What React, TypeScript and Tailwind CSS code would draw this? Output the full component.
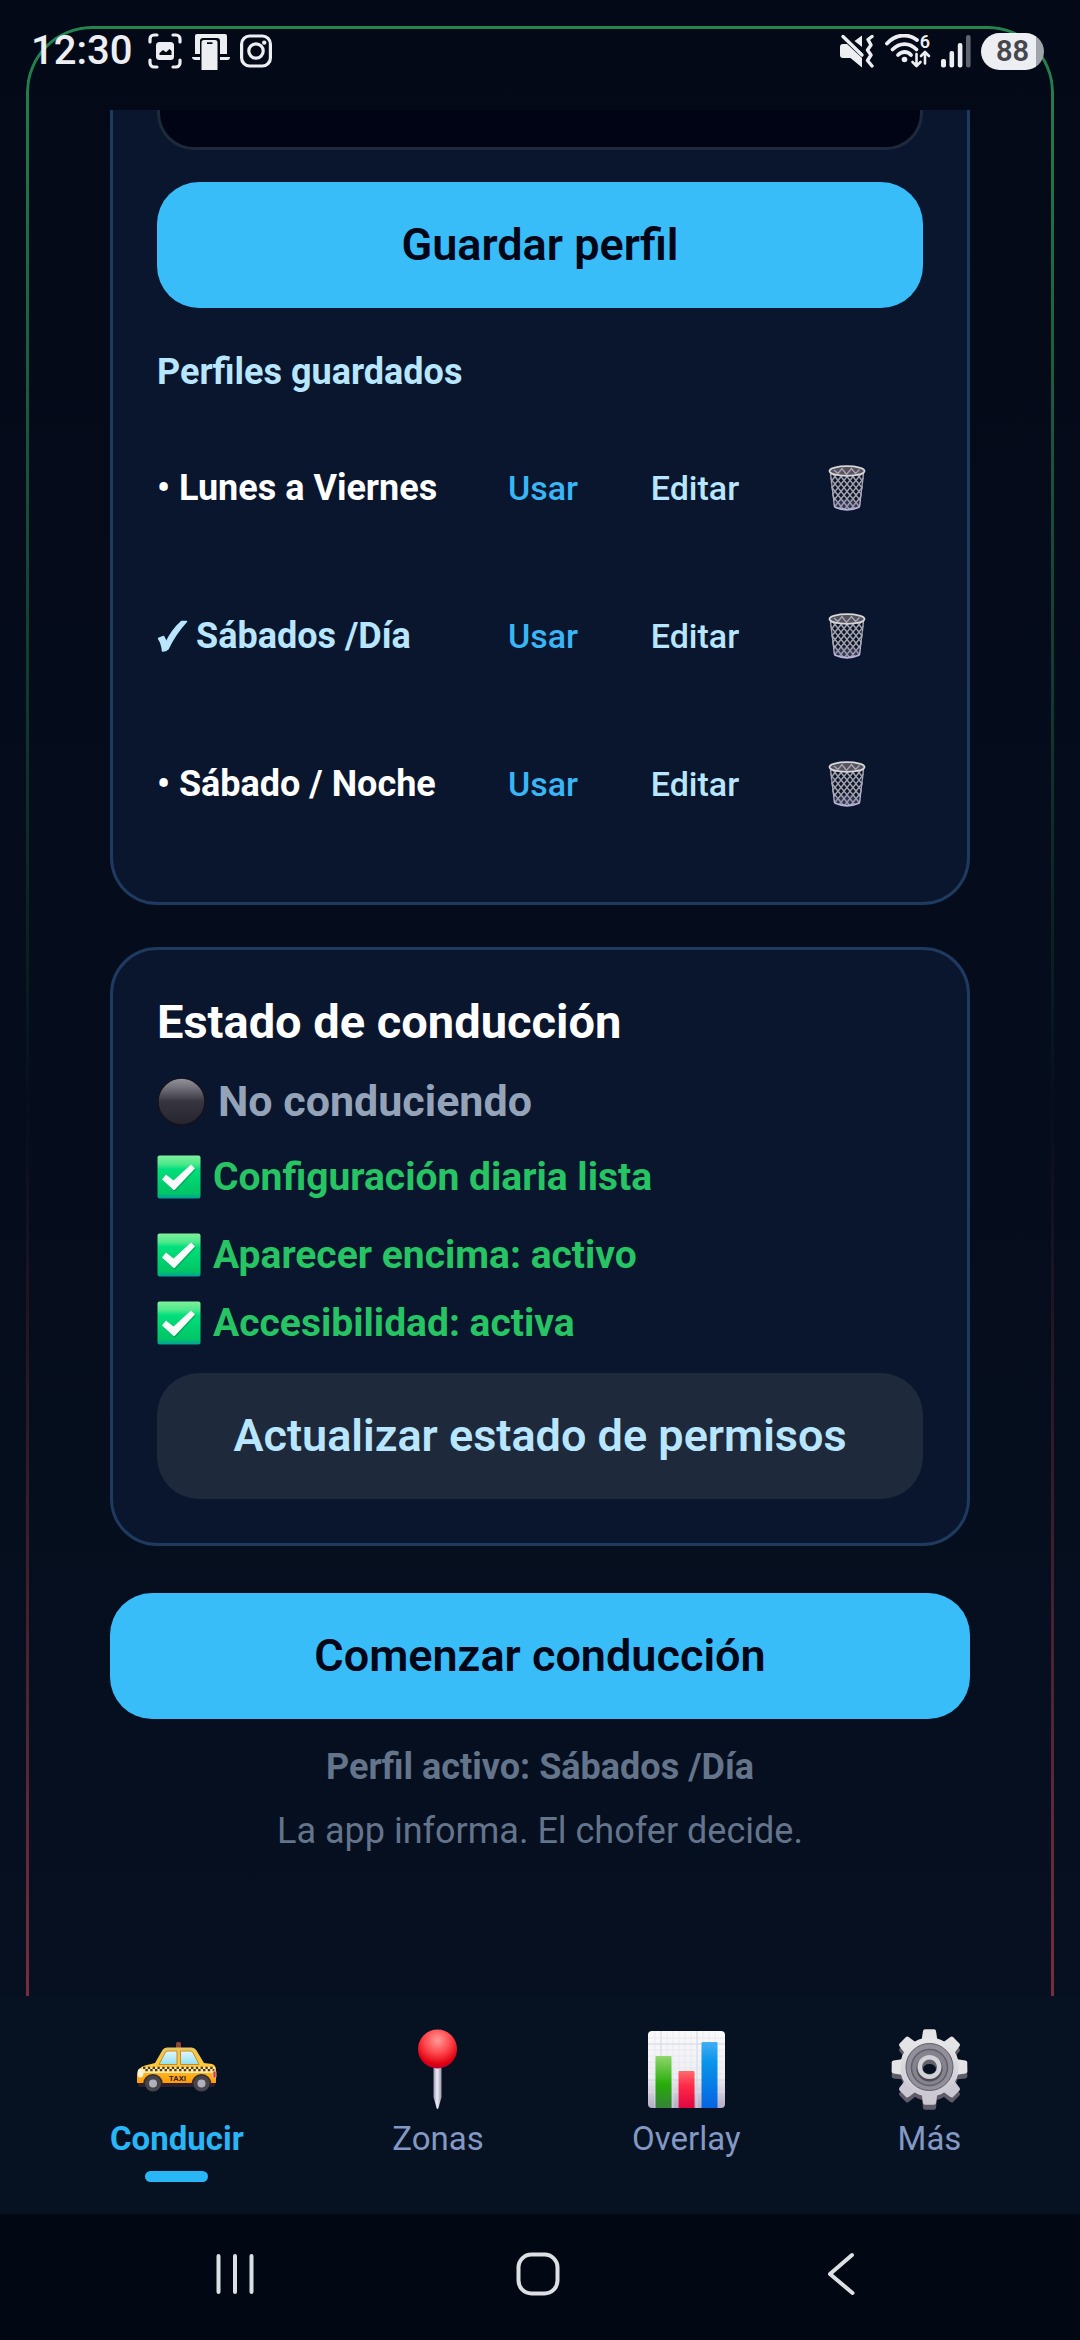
import { useId, useState } from 'react';

interface Profile {
  id: string;
  name: string;
}

interface Tab {
  id: string;
  label: string;
  icon: React.ReactNode;
}

const profiles: Profile[] = [
  { id: 'weekdays', name: 'Lunes a Viernes' },
  { id: 'saturday-day', name: 'Sábados /Día' },
  { id: 'saturday-night', name: 'Sábado / Noche' },
];

/* ---------- status bar icons ---------- */

const ScreenshotIcon = () => (
  <svg width="34" height="36" viewBox="0 0 34 36" fill="none" stroke="#eceef2" strokeWidth="3.2" strokeLinecap="round">
    <path d="M2 9V6a4 4 0 0 1 4-4h3M25 2h3a4 4 0 0 1 4 4v3M32 27v3a4 4 0 0 1-4 4h-3M9 34H6a4 4 0 0 1-4-4v-3" />
    <rect x="8" y="9" width="18" height="18" rx="3.5" fill="#eceef2" stroke="none" />
    <path d="M11.500 22v-2l3.500-3 3 2.200 3.500-3.200 2 2v4z" fill="#040915" stroke="none" />
  </svg>
);

const LinkedPhoneIcon = () => (
  <svg width="38" height="37" viewBox="0 0 38 37" fill="#eceef2">
    <path d="M3 3a2 2 0 0 1 2-2h28a2 2 0 0 1 2 2v18h-7V8a3 3 0 0 0-3-3H11a3 3 0 0 0-3 3v13H3z" />
    <path d="M0 24h8v3H3.500C1.500 27 0 25.800 0 24zM28 24h10c0 1.800-1 3-2.500 3H28z" />
    <path fillRule="evenodd" d="M12 7h11a2.500 2.500 0 0 1 2.500 2.500V37h-16V9.500A2.500 2.500 0 0 1 12 7zm3 2.300v1.700h5.500V9.300z" />
  </svg>
);

const InstagramIcon = () => (
  <svg width="32" height="34" viewBox="0 0 32 34" fill="none" stroke="#eceef2" strokeWidth="3.200">
    <rect x="1.600" y="2" width="28.800" height="30" rx="8" />
    <circle cx="16" cy="17" r="7.200" />
    <circle cx="24.200" cy="8.600" r="2.200" fill="#eceef2" stroke="none" />
  </svg>
);

const MutedIcon = () => (
  <svg width="36" height="34" viewBox="0 0 36 34">
    <path d="M1 13q0-3 3-3h4l15 14v9.500L11.500 24H4q-3 0-3-3z" fill="#eceef2" />
    <path d="M15.500 7 23 1.500V13z" fill="#eceef2" />
    <path d="M4 2.500 23 21" stroke="#eceef2" strokeWidth="3.400" strokeLinecap="round" />
    <path d="M33 2.500 29 5.500 32 11 28.500 16 32 21 28.500 26.500 33 32" fill="none" stroke="#eceef2" strokeWidth="3.400" strokeLinecap="round" strokeLinejoin="round" />
  </svg>
);

const WifiIcon = () => (
  <svg width="46" height="34" viewBox="0 0 46 34" fill="none" stroke="#eceef2" strokeLinecap="round">
    <path d="M2 9.500C11-.5 24-.5 32 6" strokeWidth="3.800" />
    <path d="M7.500 15.500c7-7.300 17-7.300 24 0" strokeWidth="3.800" />
    <path d="M13 21c4-4 9.500-4 13 0" strokeWidth="3.800" />
    <circle cx="19.500" cy="25.500" r="2.800" fill="#eceef2" stroke="none" />
    <path d="M31.500 20v11.500M27.500 28l4 4 4-4M40 29.500V18.500M36 22l4-4 4 4" strokeWidth="2.600" strokeLinejoin="round" />
    <text x="40" y="14" textAnchor="middle" fontFamily="Roboto, sans-serif" fontSize="18" fontWeight="600" fill="#eceef2" stroke="none">6</text>
  </svg>
);

const SignalIcon = () => (
  <svg width="30" height="34" viewBox="0 0 30 34" fill="#eceef2">
    <rect x="0" y="25" width="5" height="8.500" rx="2" />
    <rect x="8.500" y="17" width="4.600" height="16.500" rx="2" />
    <rect x="16.800" y="9" width="4.600" height="24.500" rx="2" />
    <rect x="25" y="1" width="4.600" height="32.500" rx="2" opacity=".4" />
  </svg>
);

/* ---------- emoji style drawings ---------- */

const TrashIcon = () => {
  const id = useId();
  return (
    <svg width="38" height="48" viewBox="0 0 38 48" fill="none">
      <clipPath id={`${id}b`}>
        <path d="M1.500 8Q19 15 36.500 8L32 43q-13 5-26 0z" />
      </clipPath>
      <linearGradient id={`${id}g`} x1="0" y1="0" x2="0" y2="1">
        <stop offset="0" stopColor="#a5a3ab" />
        <stop offset="1" stopColor="#b5b0cc" />
      </linearGradient>
      <g clipPath={`url(#${id}b)`} stroke="#a3a2a8" strokeWidth="1.500">
        {[-36, -30, -24, -18, -12, -6, 0, 6, 12, 18, 24, 30, 36].map((x) => (
          <path key={x} d={`M${x} 4l34 42M${38 - x} 4l-34 42`} />
        ))}
      </g>
      <path d="M6.500 38q12.500-6 25 0v5q-12.500 6-25 0z" fill="#8a83b0" opacity=".3" />
      <path d="M6.500 43q12.500 5.500 25 0" stroke="#b9b4d9" strokeWidth="1.800" />
      <path d="M2.500 9l4 34M35.500 9l-4 34" stroke={`url(#${id}g)`} strokeWidth="1.300" />
      <ellipse cx="19" cy="7" rx="17.500" ry="4.800" fill="#55535f" stroke="#d9d6d9" strokeWidth="1.800" />
      <path d="M6 6l4 3.500 4-5 4.500 6 5-6 4 5 4-4" stroke="#a9a7b2" strokeWidth="1.300" />
    </svg>
  );
};

const CheckBadge = () => {
  const id = useId();
  return (
    <svg className="shrink-0" width="44" height="44" viewBox="0 0 44 44">
      <linearGradient id={id} x1="0" y1="0" x2="0" y2="1">
        <stop offset="0" stopColor="#7ff09a" />
        <stop offset=".2" stopColor="#4de88c" />
        <stop offset=".32" stopColor="#00df7c" />
        <stop offset=".88" stopColor="#00c565" />
        <stop offset="1" stopColor="#009f9c" />
      </linearGradient>
      <rect x=".5" y=".5" width="43" height="43" rx="2" fill={`url(#${id})`} />
      <path d="M5 24.500 9 19.500l7.500 6L34 9.500l4 4L18 34.500q-1 1-2 0z" fill="#00934f" transform="translate(.8 1.200)" opacity=".6" />
      <path d="M5 24.500 9 19.500l7.500 6L34 9.500l4 4L18 34.500q-1 1-2 0z" fill="#f8fbf9" />
    </svg>
  );
};

const BlackCircle = () => (
  <svg className="shrink-0" width="49" height="49" viewBox="0 0 49 49">
    <linearGradient id="ball" x1="0" y1="0" x2="0" y2="1">
      <stop offset="0" stopColor="#96949c" />
      <stop offset=".25" stopColor="#6a6872" />
      <stop offset=".5" stopColor="#35343f" />
      <stop offset="1" stopColor="#26252f" />
    </linearGradient>
    <circle cx="24.500" cy="24.500" r="23.500" fill="url(#ball)" stroke="#14131d" strokeWidth="1.500" />
  </svg>
);

const TaxiIcon = () => (
  <svg width="81" height="81" viewBox="0 0 81 81">
    <linearGradient id="taxi" x1="0" y1="0" x2="0" y2="1">
      <stop offset="0" stopColor="#e8c55c" />
      <stop offset=".5" stopColor="#ffc837" />
      <stop offset="1" stopColor="#ff9a06" />
    </linearGradient>
    <linearGradient id="glass" x1="0" y1="0" x2="0" y2="1">
      <stop offset="0" stopColor="#e4f6fa" />
      <stop offset="1" stopColor="#8fe0f4" />
    </linearGradient>
    <rect x="40" y="13" width="5" height="7" rx="1.500" fill="#8a4438" />
    <path d="M2 52h77v4q0 2-3 2H5q-3 0-3-2z" fill="#2c1f2b" />
    <path d="M1 54V46q1-8 8-9.500l10-2.500L26.500 21q1.300-2.500 4.500-2.500h24q3.500 0 5.500 3L68 34l8 1q3.500 1 4 5v14z" fill="url(#taxi)" />
    <path d="M23 35.500 29 24q1-2 3-2h9v13.500zM44.500 22H54q2 0 3.200 2l6 11.500H44.500z" fill="url(#glass)" stroke="#c98a22" strokeWidth="1" />
    <path d="M6 39.500h73M7 42.500h72" stroke="#ffe9a0" strokeWidth="3" />
    <path d="M7 38.800h72" stroke="#4b3a26" strokeWidth="2.200" strokeDasharray="2.400 2.400" />
    <path d="M9.400 41.200h69" stroke="#4b3a26" strokeWidth="2.200" strokeDasharray="2.400 2.400" />
    <ellipse cx="4.500" cy="44" rx="3" ry="4.500" fill="#fff5d6" />
    <rect x="77" y="42" width="3" height="7" rx="1" fill="#d8322c" stroke="#f5d0c0" strokeWidth=".8" />
    <text x="41.500" y="51.500" textAnchor="middle" fontFamily="Roboto, sans-serif" fontSize="8" fontWeight="700" fill="#3a2412">TAXI</text>
    <path d="M7 55a10 10 0 0 1 20 0zM55.500 55a10 10 0 0 1 20 0z" fill="#3a2b28" />
    <circle cx="17" cy="54.500" r="8" fill="#46454b" />
    <circle cx="65.500" cy="54.500" r="8" fill="#46454b" />
    <circle cx="17" cy="54.500" r="4" fill="#b3b0bd" />
    <circle cx="65.500" cy="54.500" r="4" fill="#b3b0bd" />
  </svg>
);

const PinIcon = () => (
  <svg width="81" height="81" viewBox="0 0 81 81">
    <radialGradient id="pinHead" cx=".5" cy=".28" r=".72">
      <stop offset="0" stopColor="#ff9a98" />
      <stop offset=".45" stopColor="#ff4a50" />
      <stop offset=".85" stopColor="#e0000f" />
      <stop offset="1" stopColor="#b8003c" />
    </radialGradient>
    <linearGradient id="needle">
      <stop offset="0" stopColor="#9a97ab" />
      <stop offset=".45" stopColor="#f0eef8" />
      <stop offset="1" stopColor="#9a97ab" />
    </linearGradient>
    <path d="M36.500 36h8v32l-3 11q-1 2-2 0l-3-11z" fill="url(#needle)" />
    <circle cx="40.500" cy="20" r="19.500" fill="url(#pinHead)" />
  </svg>
);

const ChartIcon = () => (
  <svg width="81" height="81" viewBox="0 0 81 81">
    <linearGradient id="paper" x1="0" y1="0" x2="0" y2="1">
      <stop offset="0" stopColor="#fafafa" />
      <stop offset=".6" stopColor="#eeeef3" />
      <stop offset="1" stopColor="#b4acc4" />
    </linearGradient>
    <linearGradient id="barGreen" x1="0" y1="0" x2="0" y2="1">
      <stop offset="0" stopColor="#8ed66a" />
      <stop offset=".55" stopColor="#27ac09" />
      <stop offset="1" stopColor="#35813a" />
    </linearGradient>
    <linearGradient id="barRed" x1="0" y1="0" x2="0" y2="1">
      <stop offset="0" stopColor="#ff6a6c" />
      <stop offset=".4" stopColor="#ff2a48" />
      <stop offset="1" stopColor="#e0063f" />
    </linearGradient>
    <linearGradient id="barBlue" x1="0" y1="0" x2="0" y2="1">
      <stop offset="0" stopColor="#44adf5" />
      <stop offset=".3" stopColor="#0a95ea" />
      <stop offset="1" stopColor="#0563e2" />
    </linearGradient>
    <rect x="2" y="2" width="77" height="77" rx="4" fill="url(#paper)" />
    <path d="M2 15h77M2 51h77M15 2v77M51 2v77" stroke="#cfd4e4" strokeWidth="1" />
    <path d="M2 9h77M2 21h77M2 27h77M2 33h77M2 39h77M2 45h77M2 63h77M9 2v77M21 2v77M27 2v77M33 2v77M39 2v77M45 2v77M57 2v77M63 2v77M69 2v77" stroke="#e2e5ee" strokeWidth="1" opacity=".7" />
    <path d="M9.500 79V28q0-1 1-1h14q1 0 1 1v51z" fill="url(#barGreen)" />
    <path d="M32.500 79V43q0-1 1-1h14q1 0 1 1v36z" fill="url(#barRed)" />
    <path d="M55.500 79V14q0-1 1-1h14q1 0 1 1v65z" fill="url(#barBlue)" />
  </svg>
);

const gearAngles = [0, 45, 90, 135, 180, 225, 270, 315];

const GearIcon = () => (
  <svg width="81" height="81" viewBox="0 0 81 81">
    <linearGradient id="gear" gradientUnits="userSpaceOnUse" x1="0" y1="0" x2="0" y2="76">
      <stop offset="0" stopColor="#ececec" />
      <stop offset="1" stopColor="#c5c2cf" />
    </linearGradient>
    {/* thickness below the face */}
    <g fill="#5f5b68" transform="translate(0 5)">
      <circle cx="40.500" cy="38" r="29" />
      {gearAngles.map((a) => (
        <path key={a} d="M33 12l1-10q.3-1.800 2-1.800h9q1.700 0 2 1.800l1 10z" transform={`rotate(${a} 40.500 38)`} />
      ))}
    </g>
    <circle cx="40.500" cy="38" r="29.500" fill="#e0dfe3" />
    {gearAngles.map((a) => (
      <path key={a} d="M32.500 12l1.500-10q.3-1.800 2-1.800h9q1.700 0 2 1.800l1.500 10z" fill={a > 90 && a < 270 ? '#cbc8d3' : '#e4e3e6'} transform={`rotate(${a} 40.500 38)`} />
    ))}
    <circle cx="40.500" cy="38" r="29" fill="url(#gear)" />
    <circle cx="40.500" cy="38" r="23.500" fill="#918f9a" stroke="#5c5a64" strokeWidth="1" />
    <circle cx="40.500" cy="38.500" r="18" fill="#85838e" stroke="#62606b" strokeWidth="1.500" />
    <circle cx="40.500" cy="39.500" r="13" fill="#4e4c57" />
    <circle cx="40.500" cy="38" r="12" fill="#d3d2d7" />
    <circle cx="40.500" cy="38" r="7.500" fill="#64626d" />
    <ellipse cx="40.500" cy="40" rx="6.500" ry="5" fill="#061122" />
  </svg>
);

const tabs: Tab[] = [
  { id: 'drive', label: 'Conducir', icon: <TaxiIcon /> },
  { id: 'zones', label: 'Zonas', icon: <PinIcon /> },
  { id: 'overlay', label: 'Overlay', icon: <ChartIcon /> },
  { id: 'more', label: 'Más', icon: <GearIcon /> },
];

/* ---------- layout pieces ---------- */

const StatusBar = () => (
  <header className="relative flex h-[110px] items-center justify-between pr-[36px] pb-2 pl-[31px]">
    <div className="flex items-center gap-[10px]">
      <span className="mr-[6px] text-[40px] leading-[44px] font-medium text-[#eceef2]">12:30</span>
      <ScreenshotIcon />
      <LinkedPhoneIcon />
      <InstagramIcon />
    </div>
    <div className="flex items-center gap-[10px]">
      <MutedIcon />
      <WifiIcon />
      <SignalIcon />
      <span className="flex h-[37px] w-[63px] items-center justify-center rounded-full bg-linear-to-r from-[#eceef2] from-87% to-[#9fa3aa] to-87% text-[29px] leading-none font-semibold text-[#45474d]">
        88
      </span>
    </div>
  </header>
);

interface ProfileRowProps {
  profile: Profile;
  active: boolean;
  onUse: () => void;
}

const ProfileRow = ({ profile, active, onUse }: ProfileRowProps) => (
  <li className="flex h-[148px] items-center">
    <span className={`flex-1 text-[36px] leading-[42px] font-bold whitespace-nowrap ${active ? 'text-sky-200' : 'text-white'}`}>
      {active ? (
        <span className="flex items-center gap-2">
          <svg width="31" height="32" viewBox="0 0 31 32" fill="#bae6fd" stroke="#bae6fd" strokeWidth="1.500" strokeLinejoin="round" aria-label="Activo">
            <path d="M1.500 18.500 6.500 16.500q1.800 2.500 2.500 6Q15 10 24.500 1.500h5Q18 14 11 29q-2 2-5.500 2Q5 23.500 1.500 18.500z" />
          </svg>
          {profile.name}
        </span>
      ) : (
        `• ${profile.name}`
      )}
    </span>
    <button onClick={onUse} className="h-[126px] w-[152px] text-[34px] font-medium text-[#38b6f5]">
      Usar
    </button>
    <button className="h-[126px] w-[152px] text-[34px] font-medium text-sky-200">Editar</button>
    <button aria-label="Eliminar" className="flex h-[126px] w-[152px] items-center justify-center">
      <TrashIcon />
    </button>
  </li>
);

const CheckLine = ({ children }: { children: React.ReactNode }) => (
  <p className="flex items-center gap-3 text-[39px] leading-[46px] font-bold text-[#26c463]">
    <CheckBadge />
    {children}
  </p>
);

const SystemNav = () => (
  <div className="grid h-[126px] grid-cols-3 items-center justify-items-center bg-[#020813] pr-[88px] pb-[6px] pl-[84px]">
    <button aria-label="Recientes">
      <svg width="38" height="44" viewBox="0 0 38 44" stroke="#dcdfe3" strokeWidth="4" strokeLinecap="round">
        <path d="M2.500 4v36M19 4v36M35.500 4v36" />
      </svg>
    </button>
    <button aria-label="Inicio">
      <svg width="46" height="46" viewBox="0 0 46 46" fill="none" stroke="#dcdfe3" strokeWidth="4">
        <rect x="3.500" y="3.500" width="39" height="39" rx="13" />
      </svg>
    </button>
    <button aria-label="Atrás">
      <svg width="30" height="46" viewBox="0 0 30 46" fill="none" stroke="#dcdfe3" strokeWidth="4" strokeLinecap="round" strokeLinejoin="round">
        <path d="M26 4 4 23l22.500 19" />
      </svg>
    </button>
  </div>
);

export default function App() {
  const [activeProfile, setActiveProfile] = useState('saturday-day');
  const [activeTab, setActiveTab] = useState('drive');

  const activeName = profiles.find((p) => p.id === activeProfile)?.name;

  return (
    <div className="flex min-h-screen flex-col bg-[#020813] font-['Roboto',sans-serif]">
      <div className="relative flex flex-1 flex-col bg-linear-to-b from-[#040917] to-[#061020]">
        {/* glowing frame: green fades out going down, red fades in */}
        <div className="pointer-events-none absolute inset-x-[26px] top-[26px] bottom-0 rounded-t-[66px] border-[3px] border-b-0 border-[#24854f] [mask-image:linear-gradient(to_bottom,black,transparent_56%)]" />
        <div className="pointer-events-none absolute inset-x-[26px] top-[26px] bottom-0 rounded-t-[66px] border-[3px] border-b-0 border-[#772e3c] [mask-image:linear-gradient(to_bottom,transparent_54%,black)]" />

        <StatusBar />

        <main className="relative flex flex-1 flex-col px-[110px]">
          <section className="rounded-b-[47px] border-[3px] border-t-0 border-[#1e3a5f] bg-[#0a162e] px-[44px] pb-[44px]">
            <input
              aria-label="Nombre del perfil"
              className="block h-[40px] w-full rounded-b-[37px] border-[3px] border-t-0 border-[#1e293b] bg-[#010414] px-9 text-[36px] text-white outline-none"
            />
            <button className="mt-8 h-[126px] w-full rounded-[42px] bg-[#38bdf8] text-[45px] font-semibold text-[#020617]">
              Guardar perfil
            </button>
            <h3 className="mt-[44px] mb-[22px] text-[36px] leading-[40px] font-bold text-sky-200">Perfiles guardados</h3>
            <ul>
              {profiles.map((profile) => (
                <ProfileRow
                  key={profile.id}
                  profile={profile}
                  active={profile.id === activeProfile}
                  onUse={() => setActiveProfile(profile.id)}
                />
              ))}
            </ul>
          </section>

          <section className="mt-[42px] rounded-[47px] border-[3px] border-[#1e3a5f] bg-[#0a162e] p-[44px]">
            <h2 className="text-[47px] leading-[56px] font-bold text-white">Estado de conducción</h2>
            <p className="mt-[26px] mb-[28px] flex items-center gap-3 text-[43px] leading-[50px] font-bold text-[#94a3b8]">
              <BlackCircle />
              No conduciendo
            </p>
            <CheckLine>Configuración diaria lista</CheckLine>
            <div className="mt-8 mb-[27px] flex flex-col gap-[22px]">
              <CheckLine>Aparecer encima: activo</CheckLine>
              <CheckLine>Accesibilidad: activa</CheckLine>
            </div>
            <button className="h-[126px] w-full rounded-[42px] bg-[#1e293b] text-[45px] font-semibold text-sky-200">
              Actualizar estado de permisos
            </button>
          </section>

          <button className="mt-[47px] h-[126px] w-full rounded-[42px] bg-[#38bdf8] text-[45px] font-semibold text-[#020617]">
            Comenzar conducción
          </button>
          <p className="mt-[27px] text-center text-[36px] leading-[42px] font-bold text-[#64748b]">Perfil activo: {activeName}</p>
          <p className="mt-[22px] text-center text-[36px] leading-[42px] text-[#64748b]">La app informa. El chofer decide.</p>
        </main>
      </div>

      <nav className="flex items-start justify-between bg-[#061122] px-[110px] pt-[33px] pb-8">
        {tabs.map((tab) => {
          const active = tab.id === activeTab;
          return (
            <button key={tab.id} onClick={() => setActiveTab(tab.id)} className="flex flex-col items-center">
              {tab.icon}
              <span className={`mt-[9px] text-[33px] leading-[40px] ${active ? 'font-bold text-[#29b6f6]' : 'text-[#8399c4]'}`}>
                {tab.label}
              </span>
              <span className={`mt-3 h-[11px] w-[63px] rounded-full ${active ? 'bg-[#29b6f6]' : ''}`} />
            </button>
          );
        })}
      </nav>

      <SystemNav />
    </div>
  );
}
